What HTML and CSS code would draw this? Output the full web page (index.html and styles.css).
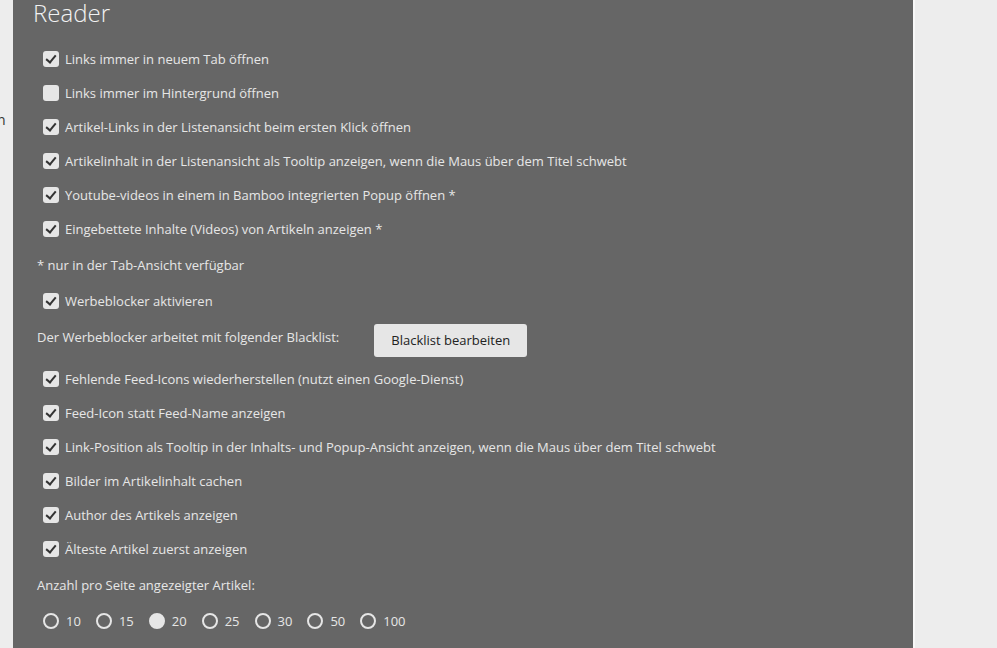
FILE: index.html
```html
<!DOCTYPE html>
<html lang="de">
<head>
  <meta charset="UTF-8" />
  <title>Reader Einstellungen</title>
  <link rel="stylesheet" href="styles.css">
</head>
<body>
  <div class="side"><span>n</span></div>
  <div class="panel">
    <h1>Reader</h1>
    <div class="opts">
      <label class="row"><span class="cb on"></span>Links immer in neuem Tab öffnen</label>
      <label class="row"><span class="cb"></span>Links immer im Hintergrund öffnen</label>
      <label class="row"><span class="cb on"></span>Artikel-Links in der Listenansicht beim ersten Klick öffnen</label>
      <label class="row"><span class="cb on"></span>Artikelinhalt in der Listenansicht als Tooltip anzeigen, wenn die Maus über dem Titel schwebt</label>
      <label class="row"><span class="cb on"></span>Youtube-videos in einem in Bamboo integrierten Popup öffnen *</label>
      <label class="row"><span class="cb on"></span>Eingebettete Inhalte (Videos) von Artikeln anzeigen *</label>
      <div class="note">* nur in der Tab-Ansicht verfügbar</div>
      <label class="row"><span class="cb on"></span>Werbeblocker aktivieren</label>
      <div class="blacklist">
        <span class="bl-text">Der Werbeblocker arbeitet mit folgender Blacklist:</span>
        <button class="btn">Blacklist bearbeiten</button>
      </div>
      <label class="row"><span class="cb on"></span>Fehlende Feed-Icons wiederherstellen (nutzt einen Google-Dienst)</label>
      <label class="row"><span class="cb on"></span>Feed-Icon statt Feed-Name anzeigen</label>
      <label class="row"><span class="cb on"></span>Link-Position als Tooltip in der Inhalts- und Popup-Ansicht anzeigen, wenn die Maus über dem Titel schwebt</label>
      <label class="row"><span class="cb on"></span>Bilder im Artikelinhalt cachen</label>
      <label class="row"><span class="cb on"></span>Author des Artikels anzeigen</label>
      <label class="row"><span class="cb on"></span>Älteste Artikel zuerst anzeigen</label>
      <div class="note">Anzahl pro Seite angezeigter Artikel:</div>
      <div class="radios">
        <label class="radio"><span class="rd"></span>10</label>
        <label class="radio"><span class="rd"></span>15</label>
        <label class="radio"><span class="rd sel"></span>20</label>
        <label class="radio"><span class="rd"></span>25</label>
        <label class="radio"><span class="rd"></span>30</label>
        <label class="radio"><span class="rd"></span>50</label>
        <label class="radio"><span class="rd"></span>100</label>
      </div>
    </div>
  </div>
  <div class="rest"></div>
</body>
</html>
```

FILE: styles.css
```css
* { box-sizing: border-box; }
html, body {
  margin: 0;
  padding: 0;
  height: 100%;
  overflow: hidden;
}
body {
  display: flex;
  background: #ededed;
  font-family: "Open Sans", sans-serif;
  font-size: 13px;
}
.side {
  width: 13px;
  flex: none;
  overflow: hidden;
  padding-top: 110px;
  color: #333;
  font-size: 14px;
}
.side span {
  display: block;
  margin-left: -3px;
}
.panel {
  width: 902px;
  flex: none;
  background: #666;
  color: #e6e6e6;
  border-right: 2px solid #f8f8f8;
  padding-left: 24px;
}
h1 {
  margin: 0 0 0 -4px;
  padding-top: 0;
  font-size: 24px;
  font-weight: 300;
  line-height: 25px;
  color: #f2f2f2;
}
.opts {
  margin-top: 17px;
}
.row {
  display: flex;
  align-items: center;
  height: 34px;
  padding-left: 6px;
}
.cb {
  width: 16px;
  height: 16px;
  border-radius: 3px;
  background: #e6e6e6;
  margin-right: 6px;
  flex: none;
  position: relative;
}
.cb.on::after {
  content: "";
  position: absolute;
  left: 5px;
  top: 2px;
  width: 4px;
  height: 8px;
  border: solid #333;
  border-width: 0 2px 2px 0;
  transform: rotate(40deg);
}
.note {
  height: 38px;
  line-height: 38px;
}
.blacklist {
  display: flex;
  align-items: center;
  height: 44px;
}
.bl-text {
  margin-right: 35px;
  margin-bottom: 6px;
}
.btn {
  width: 153px;
  height: 33px;
  border: none;
  border-radius: 3px;
  background: #e6e6e6;
  color: #222;
  font-family: "Open Sans", sans-serif;
  font-size: 13px;
  padding: 0;
}
.radios {
  display: flex;
  align-items: center;
  height: 34px;
  padding-left: 6px;
}
.radio {
  display: flex;
  align-items: center;
  gap: 7px;
  margin-right: 15px;
}
.rd {
  width: 16px;
  height: 16px;
  border-radius: 50%;
  border: 2px solid #e6e6e6;
}
.rd.sel {
  background: #e6e6e6;
}
.rest {
  flex: 1;
}
```
